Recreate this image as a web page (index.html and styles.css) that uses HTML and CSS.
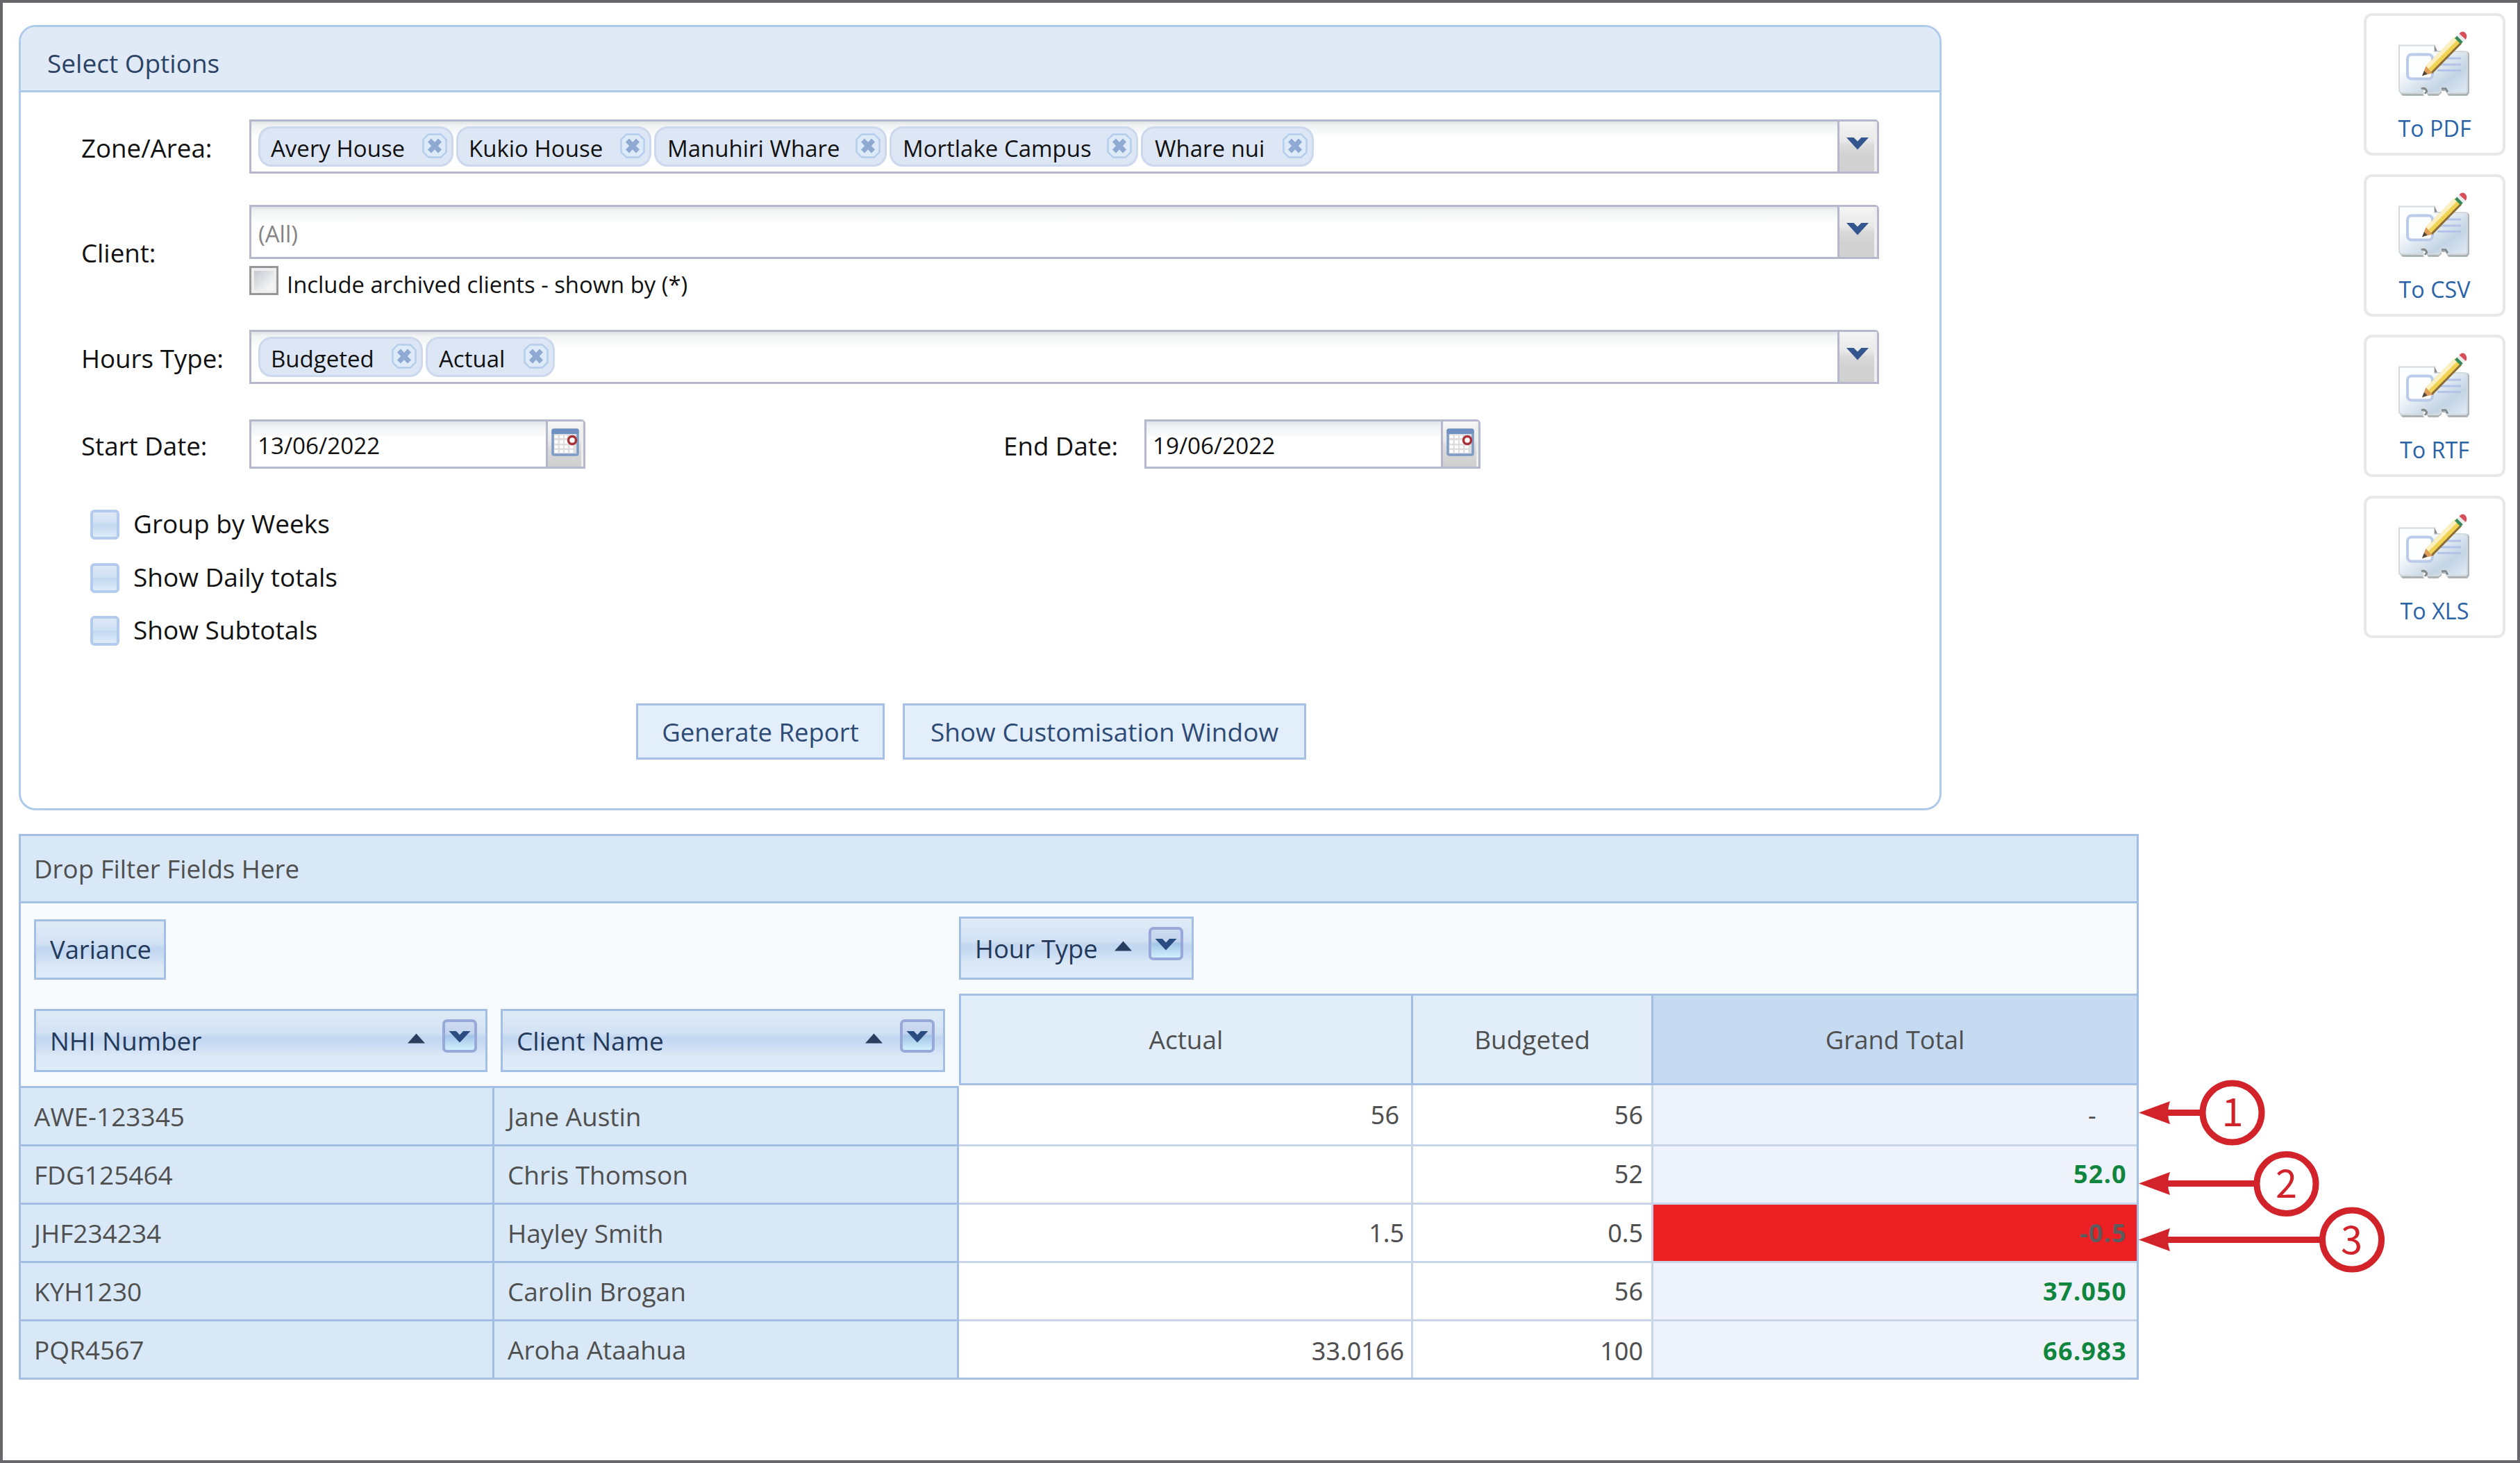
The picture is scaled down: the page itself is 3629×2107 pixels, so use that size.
FILE: index.html
```
<!DOCTYPE html>
<html lang="en">
<head>
<meta charset="utf-8">
<title>Hours Variance Report</title>
<link rel="stylesheet" href="styles.css">
</head>
<body>
<svg class="defs" width="0" height="0" aria-hidden="true">
  <defs>
    <linearGradient id="card" x1="0" y1="0" x2="1" y2="1">
      <stop offset="0.3" stop-color="#fbfdfe"/><stop offset="0.72" stop-color="#c3d4e5"/><stop offset="1" stop-color="#e0eaf4"/>
    </linearGradient>
    <linearGradient id="filter" x1="0" y1="0" x2="0" y2="1">
      <stop offset="0" stop-color="#cfdcf1"/><stop offset="0.42" stop-color="#c3d4ee"/><stop offset="0.5" stop-color="#a3c5e8"/><stop offset="1" stop-color="#d6f4ff"/>
    </linearGradient>
    <symbol id="i-close" viewBox="0 0 36 36">
      <path d="M9 1.5h18l7.500 7.500v18l-7.500 7.500H9L1.500 27V9z" fill="#deeaf8" stroke="#b3cdec" stroke-width="2.400"/>
      <path d="M10.500 10L25.500 26M25.500 10L10.500 26" stroke="#8eaad3" stroke-width="7"/>
    </symbol>
    <symbol id="i-arrow" viewBox="0 0 32 20">
      <path d="M0 1h10.500L16 6.500 21.500 1H32L16 18.500z" fill="#33568f"/>
    </symbol>
    <symbol id="i-filter" viewBox="0 0 50 48">
      <rect x="2" y="2" width="46" height="44" rx="5" fill="url(#filter)" stroke="#98a9d9" stroke-width="4"/>
      <path d="M9.500 17H20l5 5.500 5-5.500h10.500L25 33.500z" fill="#2b4c80"/>
    </symbol>
    <symbol id="i-sort" viewBox="0 0 25 15"><path d="M12.500 0.500L25 14.500H0z" fill="#2a3f5f"/></symbol>
    <symbol id="i-date" viewBox="0 0 40 40">
      <rect x="2" y="2" width="36" height="36" rx="2" fill="#dddddf" stroke="#7c9bc5" stroke-width="3.500"/>
      <rect x="0.500" y="0.500" width="39" height="7.500" rx="2" fill="#6f90c0"/>
      <path d="M4.500 10h5v4h-5zM12 10h5v4h-5zM19 10h4v4h-4zM4.500 17h5v5h-5zM12 17h5v5h-5zM19 17h5v5h-5zM4.500 24.500h5v4h-5zM12 24.500h5v4h-5zM19 24.500h5v4h-5zM26.500 24.500h5v4h-5zM4.500 31h5v4h-5zM12 31h5v4h-5zM19 31h5v4h-5zM26.500 31h5v4h-5z" fill="#fff"/>
      <circle cx="30" cy="17" r="5.500" fill="#fff" stroke="#a83238" stroke-width="3.500"/>
    </symbol>
    <symbol id="i-export" viewBox="14 9 104 102">
      <path d="M17 38h49v6h45q5 0 5 5v55l-3 4H86l-5-7h-5v3l-5 4H57l-5-8h-6l5 8H20l-4-4z" fill="#9fa7aa" opacity=".85"/>
      <path d="M15 35.500h51v8.500h43q4 0 4 4v54l-2 2H84.500l-3.500-7h-6v4l-3 3H57l-1-4-4-5h-6l4 9H18l-3-3z" fill="url(#card)" stroke="#d3d9dc" stroke-width="2"/>
      <path d="M66 35l4 8.500h-4z" fill="#868e91"/>
      <path d="M47 98q5-3 8 3l-3 4M76 97.500h6l3 5" fill="none" stroke="#7f878b" stroke-width="2.600"/>
      <rect x="27" y="48.500" width="36" height="35" rx="6" fill="#fdfeff" stroke="#b9caea" stroke-width="4"/>
      <path d="M76 54h28M72 63h32M70 71.500h34" stroke="#b4c4e8" stroke-width="3"/>
      <path d="M53.500 65L95 23l10 10L63 75.500z" fill="#f1d253"/>
      <path d="M53.500 65L95 23l4 4L57.500 69z" fill="#faf0c0"/>
      <path d="M61 73.500L103 31l2 2L63 76z" fill="#8a6d38"/>
      <path d="M53.500 65l9.500 10.500L48 79z" fill="#dc9d58"/>
      <path d="M51 72l4.500 4.500-7.500 3z" fill="#4c4742"/>
      <path d="M95 25l3.500-3.500 8.500 8.500-3.500 3.500z" fill="#36875a"/>
      <path d="M98.500 22l4-4 8.500 8.500-4 4z" fill="#e9ecec"/>
      <path d="M101.500 18.500q4-5 8.500-1.500 4 4 1 10z" fill="#d64f5b"/>
    </symbol>
  </defs>
</svg>

<div class="frame">
  <main class="main">
    <section class="panel">
      <h1 class="panel-title">Select Options</h1>
      <div class="panel-body">
        <div class="field">
          <label class="label">Zone/Area:</label>
          <div class="combo zones">
            <div class="combo-value">
              <span class="chip">Avery House<svg><use href="#i-close"/></svg></span>
              <span class="chip">Kukio House<svg><use href="#i-close"/></svg></span>
              <span class="chip">Manuhiri Whare<svg><use href="#i-close"/></svg></span>
              <span class="chip">Mortlake Campus<svg><use href="#i-close"/></svg></span>
              <span class="chip">Whare nui<svg><use href="#i-close"/></svg></span>
            </div>
            <span class="combo-btn"><svg><use href="#i-arrow"/></svg></span>
          </div>
        </div>
        <div class="field client">
          <label class="label">Client:</label>
          <div class="stack">
            <div class="combo">
              <div class="combo-value"><span class="placeholder">(All)</span></div>
              <span class="combo-btn"><svg><use href="#i-arrow"/></svg></span>
            </div>
            <label class="archived"><i class="box-grey"></i><span>Include archived clients - shown by (*)</span></label>
          </div>
        </div>
        <div class="field hours">
          <label class="label">Hours Type:</label>
          <div class="combo types">
            <div class="combo-value">
              <span class="chip">Budgeted<svg><use href="#i-close"/></svg></span>
              <span class="chip">Actual<svg><use href="#i-close"/></svg></span>
            </div>
            <span class="combo-btn"><svg><use href="#i-arrow"/></svg></span>
          </div>
        </div>
        <div class="field dates">
          <label class="label">Start Date:</label>
          <div class="date"><span class="date-value">13/06/2022</span><span class="date-btn"><svg><use href="#i-date"/></svg></span></div>
          <label class="label end">End Date:</label>
          <div class="date"><span class="date-value">19/06/2022</span><span class="date-btn"><svg><use href="#i-date"/></svg></span></div>
        </div>
        <div class="checks">
          <label class="check"><i class="box-blue"></i><span>Group by Weeks</span></label>
          <label class="check"><i class="box-blue"></i><span>Show Daily totals</span></label>
          <label class="check"><i class="box-blue"></i><span>Show Subtotals</span></label>
        </div>
        <div class="actions">
          <button class="btn generate">Generate Report</button>
          <button class="btn customise">Show Customisation Window</button>
        </div>
      </div>
    </section>

    <section class="pivot">
      <div class="filter-bar">Drop Filter Fields Here</div>
      <div class="pivot-body">
        <div class="row-side">
          <div class="row-area">
            <div class="pill variance">Variance</div>
            <div class="row-fields">
              <div class="pill nhi"><span>NHI Number</span><svg class="sort"><use href="#i-sort"/></svg><svg class="filter"><use href="#i-filter"/></svg></div>
              <div class="pill cname"><span>Client Name</span><svg class="sort"><use href="#i-sort"/></svg><svg class="filter"><use href="#i-filter"/></svg></div>
            </div>
          </div>
          <div class="row-head"><span>AWE-123345</span><span>Jane Austin</span></div>
          <div class="row-head"><span>FDG125464</span><span>Chris Thomson</span></div>
          <div class="row-head"><span>JHF234234</span><span>Hayley Smith</span></div>
          <div class="row-head"><span>KYH1230</span><span>Carolin Brogan</span></div>
          <div class="row-head"><span>PQR4567</span><span>Aroha Ataahua</span></div>
        </div>
        <div class="data-side">
          <div class="col-area">
            <div class="pill hour"><span>Hour Type</span><svg class="sort"><use href="#i-sort"/></svg><svg class="filter"><use href="#i-filter"/></svg></div>
          </div>
          <div class="col-head"><span>Actual</span><span>Budgeted</span><span class="grand">Grand Total</span></div>
          <div class="row"><span>56</span><span>56</span><span class="total dash">-</span></div>
          <div class="row"><span></span><span>52</span><span class="total">52.0</span></div>
          <div class="row"><span>1.5</span><span>0.5</span><span class="total negative">-0.5</span></div>
          <div class="row"><span></span><span>56</span><span class="total">37.050</span></div>
          <div class="row"><span>33.0166</span><span>100</span><span class="total">66.983</span></div>
        </div>
      </div>
    </section>
  </main>

  <aside class="exports">
    <a class="export"><svg><use href="#i-export"/></svg><span>To PDF</span></a>
    <a class="export"><svg><use href="#i-export"/></svg><span>To CSV</span></a>
    <a class="export"><svg><use href="#i-export"/></svg><span>To RTF</span></a>
    <a class="export"><svg><use href="#i-export"/></svg><span>To XLS</span></a>
  </aside>

  <svg class="callouts" viewBox="3080 1540 380 310">
    <g fill="none" stroke="#d2232a" stroke-width="9">
      <path d="M3115 1602.500H3170M3115 1704.500H3248M3115 1785.500H3342"/>
      <circle cx="3214.500" cy="1602.500" r="42.500"/>
      <circle cx="3292.500" cy="1705" r="42.500"/>
      <circle cx="3387" cy="1785.500" r="42.500"/>
    </g>
    <g fill="#d2232a">
      <path d="M3080 1602.500l45-16.500q-6 16.500 0 33z"/>
      <path d="M3080 1704.500l45-16.500q-6 16.500 0 33z"/>
      <path d="M3080 1785.500l45-16.500q-6 16.500 0 33z"/>
    </g>
    <g class="callout-num" text-anchor="middle">
      <text x="3215" y="1622">1</text>
      <text x="3292.500" y="1725">2</text>
      <text x="3386.500" y="1806">3</text>
    </g>
  </svg>
</div>
</body>
</html>
```
FILE: styles.css
```
* { box-sizing: border-box; }
body { margin: 0; background: #fff; font: 37px/50px "Open Sans", "Noto Sans", sans-serif; color: #111; }
.defs { position: absolute; }
svg { display: block; flex: none; }
i { display: block; flex: none; }
label { display: block; }

.frame { position: relative; display: flex; justify-content: space-between; align-items: flex-start; width: 3629px; height: 2107px; border: 4px solid #67676b; padding: 15px 17px 0 23px; }
.main { width: 3053px; padding-top: 17px; }

/* Options panel */
.panel { width: 2769px; height: 1131px; border: 3px solid #aecaeb; border-radius: 24px; overflow: hidden; background: #fff; }
.panel-title { margin: 0; height: 94px; padding: 27px 0 0 38px; border-bottom: 3px solid #aecaeb; background: #e0eaf6; color: #2c4365; font-size: 37px; font-weight: 400; line-height: 50px; }
.panel-body { padding: 39px 0 0 85px; }
.field { display: flex; align-items: center; }
.label { width: 244px; padding: 3px 0 0 2px; font-size: 36.7px; white-space: nowrap; }
.combo { display: flex; width: 2347px; height: 78px; border: 3px solid #b5b8cd; border-top-right-radius: 6px; background: linear-gradient(#e0e4e8 0, #f2f4f4 6px, #f7f9f9 15px, #fff 24px); }
.combo-value { flex: 1; display: flex; gap: 4px; padding: 7px 0 0 10px; font-size: 33px; }
.combo-btn { width: 57px; border-left: 3px solid #b5b8cd; border-right: 4px solid #eeeeec; background: linear-gradient(#f4f4f4, #e8e8e8 28px, #d9d9d9 36px, #d1d1d1 52px); padding: 22px 0 0 10px; }
.combo-btn svg { width: 32px; height: 20px; }
.chip { display: flex; justify-content: space-between; height: 58px; padding: 0 6px 0 16px; border: 3px solid #cbd8ee; border-radius: 19px; background: #dde6f5; line-height: 57px; white-space: nowrap; }
.chip svg { width: 36px; height: 36px; margin-top: 7px; }
.zones .chip:nth-child(1), .zones .chip:nth-child(2) { width: 281px; }
.zones .chip:nth-child(1), .zones .chip:nth-child(2), .types .chip:nth-child(1) { padding-left: 15px; }
.zones .chip:nth-child(3) { width: 335px; }
.zones .chip:nth-child(4) { width: 358px; }
.zones .chip:nth-child(5) { width: 249px; padding-left: 17px; }
.types .chip:nth-child(1) { width: 237px; }
.types .chip:nth-child(2) { width: 186px; }
.placeholder { color: #858585; line-height: 63px; }
.client { margin-top: 45px; }
.client .label { padding-top: 8px; }
.archived { display: flex; gap: 12px; height: 42px; margin-top: 10px; font-size: 32.8px; line-height: 53px; }
.box-grey { width: 42px; height: 42px; border: 3px solid #969696; background: linear-gradient(135deg, #c5cad2, #f4f4f4 80%) content-box, #eee; padding: 4px; }
.hours { margin-top: 50px; }
.dates { margin-top: 51px; }
.dates .label { padding-top: 4px; }
.dates .end { width: 205px; margin-left: 600px; }
.date { display: flex; width: 484px; height: 71px; border: 3px solid #b5b8cd; border-top-right-radius: 6px; background: linear-gradient(#e0e4ea 0, #f1f3f5 8px, #f7f8f9 18px, #fff 24px); font-size: 33.2px; }
.date-value { flex: 1; padding-left: 9px; line-height: 69px; }
.date-btn { width: 54px; border-left: 3px solid #b5b8cd; border-right: 3px solid #eeeeec; background: linear-gradient(#f6f6f6, #eaeaea 28px, #dcdcdc 36px, #cfcfcf 62px); padding: 10px 0 0 5px; }
.date-btn svg { width: 40px; height: 40px; }
.checks { display: flex; flex-direction: column; gap: 33px; padding: 59px 0 0 15px; }
.check { display: flex; gap: 20px; height: 43.500px; line-height: 39px; }
.box-blue { width: 42px; height: 43px; border: 4px solid #b3cbec; border-radius: 6px; background: linear-gradient(#dfe9f6, #cfe0f4 45%, #c2d8f1 52%, #dfedf9); }
.actions { display: flex; gap: 26px; margin: 82px 0 0 801px; }
.btn { height: 81px; padding: 2px 0 0; border: 3px solid #a5bfe5; background: #e2eefa; color: #2d4a75; font: inherit; }
.generate { width: 358px; font-size: 36.5px; }
.customise { width: 581px; }

/* Pivot grid */
.pivot { width: 3053px; margin-top: 34px; border: 3px solid #a3bfe4; color: #4f4f4f; }
.filter-bar { height: 97px; padding: 22px 0 0 19px; border-bottom: 3px solid #a3bfe4; background: #d8e8f6; font-size: 36.7px; }
.pivot-body { display: flex; }
.row-side { width: 1351px; }
.row-area { height: 263px; padding: 23px 0 0 19px; background: #f7fbfe; }
.pill { display: flex; align-items: flex-start; height: 91px; border: 3px solid #a3bfe4; padding: 20px 12px 0 20px; background: linear-gradient(#e0ebf7, #d2e2f4 32px, #c2d7f0 38px, #c6daf2 46px, #dbe8f6 64px, #deebf8); color: #24395a; line-height: 46px; white-space: nowrap; }
.pill .sort { width: 25px; height: 15px; margin: 12px 25px 0 auto; }
.pill .filter { width: 50px; height: 48px; margin-top: -8px; }
.variance { width: 190px; height: 87px; padding-top: 17px; font-size: 36.3px; }
.row-fields { display: flex; gap: 19px; margin-top: 42px; }
.nhi { width: 653px; }
.cname { width: 640px; }
.row-head { display: flex; height: 84px; border-top: 3px solid #a3bfe4; background: #d8e8f6; line-height: 82px; }
.row-head span { width: 669px; border-right: 3px solid #a3bfe4; padding-left: 19px; }
.row-head span:first-child { width: 682px; padding-left: 19px; }
.data-side { width: 1696px; background: #f7fbfe; }
.col-area { height: 130px; padding-top: 19px; }
.hour { width: 338px; font-size: 36.5px; }
.hour .sort { margin-right: 24px; }
.col-head, .row { display: grid; grid-template-columns: 654px 346px 696px; grid-template-rows: minmax(0, 1fr); }
.col-head { height: 132px; border: solid #a3bfe4; border-width: 3px 0 3px 3px; grid-template-columns: 651px 346px 696px; line-height: 126px; text-align: center; }
.col-head span { border-right: 3px solid #a3bfe4; background: #e1eefa; }
.col-head .grand { border-right: 0; background: #c6daf2; font-size: 36.5px; }
.row { height: 84px; border-bottom: 3px solid #c8d4e8; background: #fff; font: 36px/81px "Noto Sans", sans-serif; text-align: right; }
.row span { border-right: 3px solid #c8d4e8; padding-right: 12px; }
.row span:first-child { padding-right: 10px; }
.row .total { border-right: 0; padding-right: 14px; background: #eef3fb; color: #10853d; font-weight: 700; letter-spacing: 1.3px; }
.row .dash { padding-right: 57px; color: #4f4f4f; font-weight: 400; }
.row .negative { background: #ed2024; color: #5c5c5e; }
.row:nth-child(3) { height: 88px; line-height: 85px; }
.row:nth-child(3) span:first-child { padding-right: 17px; }
.row:nth-child(4) { line-height: 80px; }
.row:last-child { height: 81px; border-bottom: 0; line-height: 86px; }

/* Export buttons */
.exports { display: flex; flex-direction: column; gap: 26.5px; }
.export { display: flex; flex-direction: column; align-items: center; width: 204px; height: 205px; border: 4px solid #e9e8e9; border-radius: 12px; color: #2b64a6; font-size: 32.3px; line-height: 50px; }
.export svg { width: 104px; height: 102px; margin-top: 16px; }
.export span { margin-top: 18px; }

/* Numbered callouts over the grid's right edge */
.callouts { position: absolute; left: 3076px; top: 1536px; width: 380px; height: 310px; }
.callout-num { font: 56px "Noto Sans CJK SC", sans-serif; fill: #d2232a; }
```
